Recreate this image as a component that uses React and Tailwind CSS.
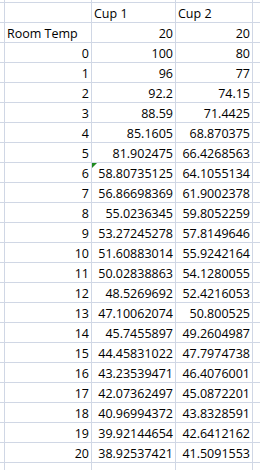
const rows = [
  ['0', '100', '80'],
  ['1', '96', '77'],
  ['2', '92.2', '74.15'],
  ['3', '88.59', '71.4425'],
  ['4', '85.1605', '68.870375'],
  ['5', '81.902475', '66.4268563'],
  ['6', '58.80735125', '64.1055134', true],
  ['7', '56.86698369', '61.9002378'],
  ['8', '55.0236345', '59.8052259'],
  ['9', '53.27245278', '57.8149646'],
  ['10', '51.60883014', '55.9242164'],
  ['11', '50.02838863', '54.1280055'],
  ['12', '48.5269692', '52.4216053'],
  ['13', '47.10062074', '50.800525'],
  ['14', '45.7455897', '49.2604987'],
  ['15', '44.45831022', '47.7974738'],
  ['16', '43.23539471', '46.4076001'],
  ['17', '42.07362497', '45.0872201'],
  ['18', '40.96994372', '43.8328591'],
  ['19', '39.92144654', '42.6412162'],
  ['20', '38.92537421', '41.5091553'],
];

const line = 'border-[#d0d7e5]';

const Row = ({ a = '', b = '', c = '', left = false, flag = false, h = 'h-[20px]' }) => (
  <div className={`flex ${h} border-b ${line}`}>
    <div className={`w-[5px] shrink-0 border-r ${line}`} />
    <div className={`w-[87px] shrink-0 border-r ${line} flex items-end pb-[1px] px-[2px] ${left ? 'justify-start' : 'justify-end'}`}>
      {a}
    </div>
    <div className={`relative w-[84px] shrink-0 border-r ${line} flex items-end pb-[1px] px-[2px] ${left ? 'justify-start' : 'justify-end'}`}>
      {flag && (
        <svg className="absolute left-0 top-0" width="5" height="5" viewBox="0 0 5 5">
          <polygon points="0,0 5,0 0,5" fill="#1f8a1f" />
        </svg>
      )}
      {b}
    </div>
    <div className={`w-[77px] shrink-0 border-r ${line} flex items-end pb-[1px] px-[2px] ${left ? 'justify-start' : 'justify-end'}`}>
      {c}
    </div>
    <div className="flex-1" />
  </div>
);

const App = () => {
  return (
    <div
      className="w-[260px] h-[470px] overflow-hidden bg-white text-black text-[12.5px] leading-[15px]"
      style={{ fontFamily: '"Open Sans", "Noto Sans", sans-serif' }}
    >
      <Row h="h-[3px]" />
      <div className={`flex h-[20px] border-b ${line}`}>
        <div className={`w-[5px] shrink-0 border-r ${line}`} />
        <div className={`w-[87px] shrink-0 border-r ${line}`} />
        <div className={`w-[84px] shrink-0 border-r ${line} flex items-end pb-[1px] px-[2px]`}>Cup 1</div>
        <div className={`w-[77px] shrink-0 border-r ${line} flex items-end pb-[1px] px-[2px]`}>Cup 2</div>
        <div className="flex-1" />
      </div>
      <div className={`flex h-[20px] border-b ${line}`}>
        <div className={`w-[5px] shrink-0 border-r ${line}`} />
        <div className={`w-[87px] shrink-0 border-r ${line} flex items-end pb-[1px] px-[2px]`}>Room Temp</div>
        <div className={`w-[84px] shrink-0 border-r ${line} flex items-end justify-end pb-[1px] px-[2px]`}>20</div>
        <div className={`w-[77px] shrink-0 border-r ${line} flex items-end justify-end pb-[1px] px-[2px]`}>20</div>
        <div className="flex-1" />
      </div>
      {rows.map(([a, b, c, flag]) => (
        <Row key={a} a={a} b={b} c={c} flag={flag} />
      ))}
      <Row h="h-[20px]" />
    </div>
  );
};

export default App;
